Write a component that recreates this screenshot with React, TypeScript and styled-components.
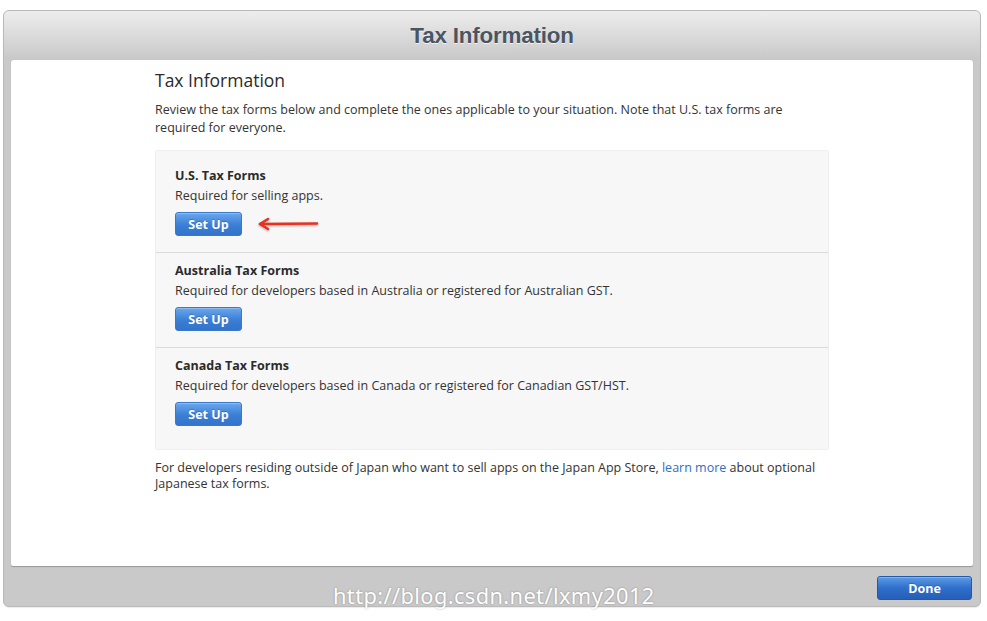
import React from "react";
import styled, { createGlobalStyle } from "styled-components";

const GlobalStyle = createGlobalStyle`
  html, body { margin: 0; padding: 0; background: #ffffff; }
  body { font-family: "Open Sans", "Liberation Sans", sans-serif; }
`;

const Page = styled.div`
  width: 987px;
  height: 621px;
  padding: 10px 6px 0 3px;
  box-sizing: border-box;
  position: relative;
`;

const Frame = styled.div`
  height: 597px;
  border-radius: 6px;
  background: #c9c9c9;
  border: 1px solid #b9b9b9;
  box-sizing: border-box;
  display: flex;
  flex-direction: column;
  box-shadow: 0 1px 1px rgba(0,0,0,0.08);
  overflow: hidden;
`;

const Header = styled.div`
  height: 49px;
  flex: none;
  background: linear-gradient(#ededed, #c8c8c8);
  display: flex;
  align-items: center;
  justify-content: center;
`;

const HeaderTitle = styled.h1`
  margin: 0;
  font-family: "Liberation Sans", Arial, sans-serif;
  font-weight: bold;
  font-size: 22.4px;
  color: #4a5564;
  text-shadow: 0 1px 0 rgba(255,255,255,0.7);
  letter-spacing: -0.2px;
`;

const Panel = styled.div`
  height: 506px;
  flex: none;
  margin: 0 7px;
  background: #ffffff;
  border-radius: 3px 3px 2px 2px;
  box-shadow: 0 1px 1px rgba(0,0,0,0.25);
`;

const Content = styled.div`
  width: 674px;
  margin-left: 144px;
  padding-top: 9px;
  color: #333;
`;

const Title = styled.h2`
  margin: 0;
  font-size: 17.5px;
  line-height: 22px;
  font-weight: normal;
  color: #2b2b2b;
`;

const Paragraph = styled.p<{ $top: number }>`
  margin: ${(p) => p.$top}px 0 0;
  font-size: 12.5px;
  line-height: 18px;
  color: #333;
`;

const FootNote = styled.p`
  margin: 10px 0 0;
  font-size: 12.5px;
  line-height: 16px;
  color: #333;
`;

const Link = styled.a`
  color: #2c6fc4;
  text-decoration: none;
`;

const FormsBox = styled.div`
  margin-top: 13px;
  background: #f7f7f7;
  border: 1px solid #efefef;
  border-radius: 2px;
  padding: 6px 0 7px;
`;

const Section = styled.div<{ $first?: boolean }>`
  padding: ${(p) => (p.$first ? "9px" : "8px")} 19px 16px;
  border-top: ${(p) => (p.$first ? "none" : "1px solid #dcdcdc")};
`;

const SectionTitle = styled.div`
  padding-top: 1px;
  font-size: 12.5px;
  line-height: 18px;
  font-weight: bold;
  color: #2b2b2b;
`;

const SectionText = styled.div`
  margin-top: 2px;
  font-size: 12.5px;
  line-height: 18px;
  color: #333;
`;

const ActionRow = styled.div`
  margin-top: 7px;
  display: flex;
  align-items: center;
  gap: 15px;
`;

const BlueButton = styled.button<{ $w: number; $dark?: boolean }>`
  width: ${(p) => p.$w}px;
  height: 24px;
  border-radius: 3px;
  border: 1px solid ${(p) => (p.$dark ? "#2459a6" : "#3a78c8")};
  background: ${(p) =>
    p.$dark
      ? "linear-gradient(#5d9ae6, #2f6fcb 50%, #245fb8)"
      : "linear-gradient(#6aa7ec, #3a7ed6 55%, #3373cc)"};
  color: #fff;
  font-family: "Open Sans", "Liberation Sans", sans-serif;
  font-size: 12.5px;
  font-weight: bold;
  padding: 0;
  box-shadow: inset 0 1px 0 rgba(255,255,255,0.25);
  text-shadow: 0 -1px 0 rgba(0,0,0,0.2);
  cursor: pointer;
`;

const Footer = styled.div`
  flex: 1;
  display: flex;
  align-items: flex-start;
  justify-content: flex-end;
  padding: 10px 8px 0 0;
`;

const Watermark = styled.div`
  position: absolute;
  left: 333px;
  top: 581px;
  font-family: "Noto Sans", "DejaVu Sans", sans-serif;
  font-size: 21.8px;
  line-height: 30px;
  color: #ffffff;
  text-shadow: 0 0 2px rgba(0,0,0,0.35);
  letter-spacing: 0.4px;
  pointer-events: none;
`;

const Arrow = () => (
  <svg width="64" height="14" viewBox="0 0 64 14" style={{ filter: "drop-shadow(0 1px 1px rgba(0,0,0,0.3))" }}>
    <g stroke="#e8321e" strokeWidth="2.6" fill="none" strokeLinecap="round" strokeLinejoin="round">
      <path d="M3 7 L60 6.5" />
      <path d="M11 2 L3 7 L11 12" />
    </g>
  </svg>
);

const forms = [
  { title: "U.S. Tax Forms", text: "Required for selling apps.", arrow: true },
  {
    title: "Australia Tax Forms",
    text: "Required for developers based in Australia or registered for Australian GST.",
  },
  {
    title: "Canada Tax Forms",
    text: "Required for developers based in Canada or registered for Canadian GST/HST.",
  },
];

export default function App() {
  return (
    <Page>
      <GlobalStyle />
      <Frame>
        <Header>
          <HeaderTitle>Tax Information</HeaderTitle>
        </Header>
        <Panel>
          <Content>
            <Title>Tax Information</Title>
            <Paragraph $top={10}>
              Review the tax forms below and complete the ones applicable to your situation. Note that U.S. tax forms are
              required for everyone.
            </Paragraph>
            <FormsBox>
              {forms.map((f, i) => (
                <Section key={f.title} $first={i === 0}>
                  <SectionTitle>{f.title}</SectionTitle>
                  <SectionText>{f.text}</SectionText>
                  <ActionRow>
                    <BlueButton $w={67}>Set Up</BlueButton>
                    {f.arrow && <Arrow />}
                  </ActionRow>
                </Section>
              ))}
            </FormsBox>
            <FootNote>
              For developers residing outside of Japan who want to sell apps on the Japan App Store,{" "}
              <Link href="#">learn more</Link> about optional Japanese tax forms.
            </FootNote>
          </Content>
        </Panel>
        <Footer>
          <BlueButton $w={95} $dark>
            Done
          </BlueButton>
        </Footer>
      </Frame>
      <Watermark>http://blog.csdn.net/lxmy2012</Watermark>
    </Page>
  );
}
